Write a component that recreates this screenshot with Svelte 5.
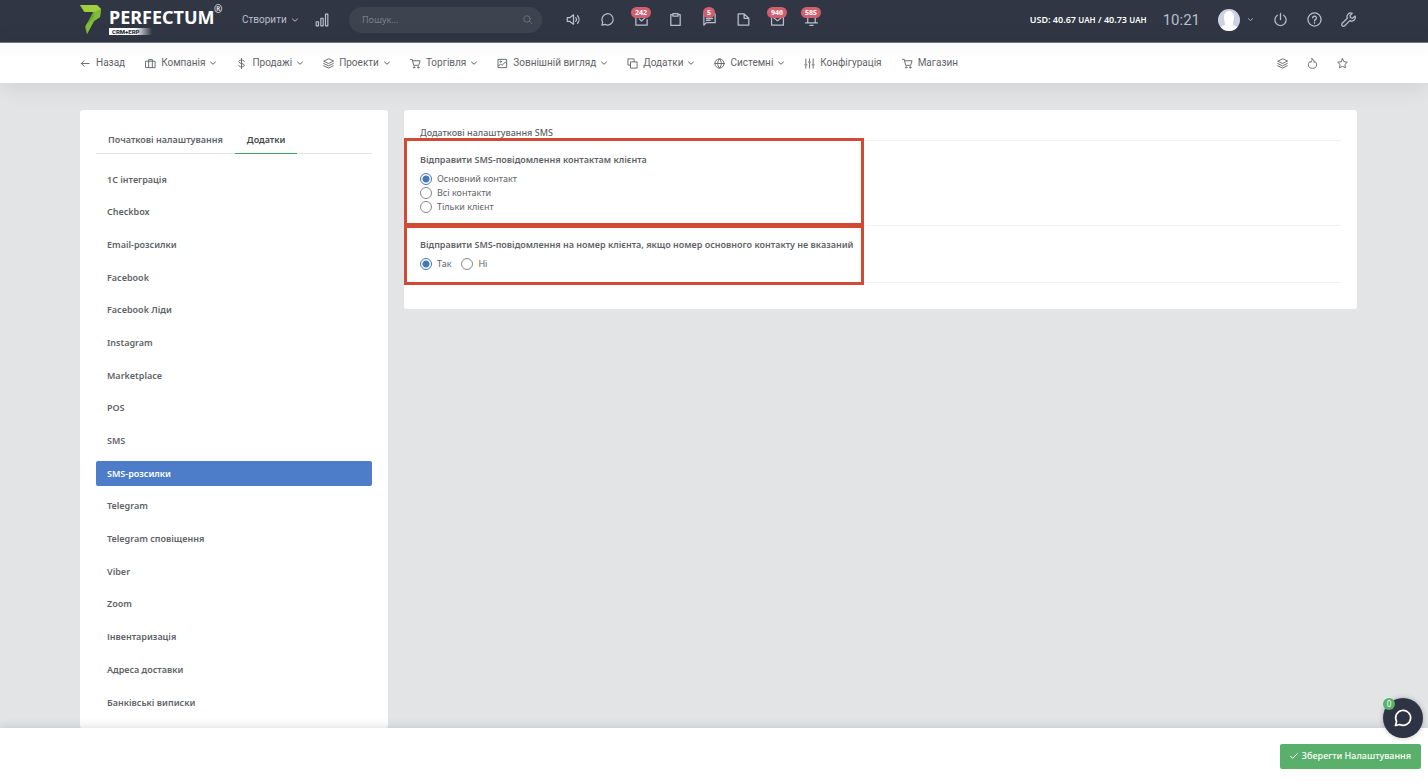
<script>
  const icons = {
    sound: '<path d="M2 9v6h4l6 4.500V4.500L6 9H2zM15.500 9a4 4 0 0 1 0 6M18.500 6a9 9 0 0 1 0 12"/>',
    chat: '<path d="M3 21l1.300-4.800A9 9 0 1 1 8 19.800z"/>',
    check: '<path d="M8.500 11l3.500 3.500L20 7M21 12v9H3V4h12"/>',
    clipboard: '<path d="M8 4H4.500v17.500h15V4H16M8 2.500h8v4H8z"/>',
    message: '<path d="M3 3h18v14H7l-4 4zM7 7.500h10M7 10.500h10M7 13.500h6"/>',
    file: '<path d="M13 3H3.500v18h17V10zM13 3v7h7"/>',
    mail: '<path d="M2.500 4h19v17h-19zM3 7l9 7 9-7"/>',
    bell: '<path d="M6 17V9a6 6 0 0 1 12 0v8M2.500 17.500h19M9.500 21.500h5"/>',
    power: '<path d="M7 5.200a9 9 0 1 0 10 0M12 2v10"/>',
    help: '<circle cx="12" cy="12" r="10.500"/><path d="M9 9.500a3 3 0 1 1 4.500 2.700c-1 .6-1.500 1-1.500 2.100M12 16.800v1"/>',
    wrench: '<path d="M22.500 6.500l-4 3.500-3.500-1-.5-3.500L18 2a6 6 0 0 0-7.800 8L2 18a2.800 2.800 0 0 0 4 4l8-8.200a6 6 0 0 0 8.500-7.300z"/>',
    back: '<path d="M20 12H3M9 6l-6 6 6 6"/>',
    briefcase: '<path d="M2 7h20v14H2zM8 21V3.500h8V21"/>',
    dollar: '<path d="M12 1v22M18 7.500C17.500 5.500 15 4.500 12 4.500c-3.500 0-6 1.500-6 3.700 0 5 12 2.300 12 7.500 0 2.300-2.200 3.800-6 3.800-3.500 0-5.500-1.200-6-3.500"/>',
    layers: '<path d="M12 2L1.500 7 12 12l10.500-5zM1.500 12L12 17l10.500-5M1.500 17L12 22l10.500-5"/>',
    cart: '<path d="M1 3h4l3 13h11l3-10H6"/><circle cx="9" cy="20.500" r="1.500"/><circle cx="18" cy="20.500" r="1.500"/>',
    image: '<path d="M3 3h18v18H3zM3 17l5-4 3 3 7-7 3 3"/><circle cx="8" cy="8" r="1.500"/>',
    copy: '<path d="M8.500 8.500H22V22H8.500zM8 15.500H2V2h13.500v6"/>',
    globe: '<circle cx="12" cy="12" r="10"/><path d="M2 12h20M12 2c-5.500 6-5.500 14 0 20M12 2c5.500 6 5.500 14 0 20"/>',
    sliders: '<path d="M4 2v11M4 17v5M12 2v5M12 11v11M20 2v11M20 17v5M1.500 15h5M9.500 9h5M17.500 15h5"/>',
    fire: '<path d="M11 1.500c1 4-1.500 5.500-2.500 8.500-1-.5-1.500-1.500-2-2.500C4.500 9.500 3 12 3 14.500a9 8 0 0 0 18 0c0-3-1.500-5.500-4-7-.3 1.500-.8 2-1.800 2.500.3-3.500-1-7-4.200-8.500z"/>',
    star: '<path d="M12 1.500l3.200 6.700 7.300 1-5.300 5.100 1.300 7.200-6.500-3.400-6.500 3.400 1.300-7.200-5.300-5.100 7.300-1z"/>',
    down: '<path stroke-width="4" d="M2 8l10 9 10-9"/>',
    tick: '<path stroke-width="3" d="M2 13l6 6L22 5"/>',
    search: '<circle cx="10.500" cy="10.500" r="8.500"/><path d="M17 17l6 6"/>',
    bars: '<path d="M2 15h4v7H2zM10 9h4v13h-4zM18 2h4v20h-4z"/>'
  };

  const shortcuts = [
    { icon: 'sound', label: 'Звук' },
    { icon: 'chat', label: 'Чат' },
    { icon: 'check', label: 'Завдання', count: 242 },
    { icon: 'clipboard', label: 'Нотатки' },
    { icon: 'message', label: 'Повідомлення', count: 5 },
    { icon: 'file', label: 'Файли' },
    { icon: 'mail', label: 'Пошта', count: 946 },
    { icon: 'bell', label: 'Сповіщення', count: 585 }
  ];
  const tools = [
    { icon: 'power', label: 'Вийти' },
    { icon: 'help', label: 'Довідка' },
    { icon: 'wrench', label: 'Налаштування' }
  ];
  const menu = [
    { icon: 'back', label: 'Назад' },
    { icon: 'briefcase', label: 'Компанія', sub: true },
    { icon: 'dollar', label: 'Продажі', sub: true },
    { icon: 'layers', label: 'Проекти', sub: true },
    { icon: 'cart', label: 'Торгівля', sub: true },
    { icon: 'image', label: 'Зовнішній вигляд', sub: true },
    { icon: 'copy', label: 'Додатки', sub: true },
    { icon: 'globe', label: 'Системні', sub: true },
    { icon: 'sliders', label: 'Конфігурація' },
    { icon: 'cart', label: 'Магазин' }
  ];
  const quick = [
    { icon: 'layers', label: 'Шари' },
    { icon: 'fire', label: 'Популярне' },
    { icon: 'star', label: 'Обране' }
  ];
  const modules = [
    '1C інтеграція', 'Checkbox', 'Email-розсилки', 'Facebook', 'Facebook Ліди', 'Instagram',
    'Marketplace', 'POS', 'SMS', 'SMS-розсилки', 'Telegram', 'Telegram сповіщення', 'Viber',
    'Zoom', 'Інвентаризація', 'Адреса доставки', 'Банківські виписки'
  ];
  const recipients = ['Основний контакт', 'Всі контакти', 'Тільки клієнт'];

  let active = $state('SMS-розсилки');
  let recipient = $state('Основний контакт');
  let fallback = $state('Так');
</script>

{#snippet icon(name, size = 15)}
  <svg class="icon" width={size} height={size} viewBox="0 0 24 24" aria-hidden="true">{@html icons[name]}</svg>
{/snippet}

<div class="page">
  <header class="topbar">
    <a class="logo" href="#home">
      <svg width="22" height="30" viewBox="0 0 22 30" aria-hidden="true">
        <path d="M0 0h17l4 4-1 8-6 4-7 13-2-7 5-9 3-6H4z" fill="#69aa35" />
        <path d="M0 0h17l4 4-6 3H5z" fill="#a2cf3e" />
        <path d="M15 7l6-3-1 8-6 4-7 13-1-9 7-6z" fill="#82bd3a" />
      </svg>
      <span class="brand">
        <span class="name">PERFECTUM</span>
        <span class="tag">CRM+ERP</span>
        <span class="reg">®</span>
      </span>
    </a>
    <button class="create">Створити {@render icon('down', 6)}</button>
    <button class="tool" aria-label="Звіти">{@render icon('bars', 14)}</button>
    <div class="search">
      <input type="search" placeholder="Пошук..." aria-label="Пошук" />
      {@render icon('search', 9)}
    </div>
    <div class="tools">
      {#each shortcuts as s}
        <button class="tool" aria-label={s.label}>
          {@render icon(s.icon)}
          {#if s.count}<span class="count">{s.count}</span>{/if}
        </button>
      {/each}
    </div>
    <div class="rate">USD: 40.67 <small>UAH</small> / 40.73 <small>UAH</small></div>
    <time class="clock">10:21</time>
    <button class="profile" aria-label="Профіль">
      <svg width="22" height="22" viewBox="0 0 22 22" aria-hidden="true">
        <clipPath id="face"><circle cx="11" cy="11" r="11" /></clipPath>
        <g clip-path="url(#face)">
          <path d="M0 0h22v22H0z" fill="#cbd2e3" />
          <path d="M6 8c0-8 10-8 10 0 0 4-1 5-1 8l5 2v4H2v-4l5-2c0-3-1-4-1-8z" fill="#fff" />
        </g>
      </svg>
      {@render icon('down', 5)}
    </button>
    <div class="tools">
      {#each tools as t}
        <button class="tool" aria-label={t.label}>{@render icon(t.icon)}</button>
      {/each}
    </div>
  </header>

  <nav class="menu">
    {#each menu as m}
      <a href="#menu">
        {@render icon(m.icon, 11)}
        <span>{m.label}</span>
        {#if m.sub}{@render icon('down', 6)}{/if}
      </a>
    {/each}
    <div class="quick">
      {#each quick as q}
        <button aria-label={q.label}>{@render icon(q.icon, 11)}</button>
      {/each}
    </div>
  </nav>

  <main class="content">
    <aside class="card side">
      <div class="tabs" role="tablist">
        <button role="tab" aria-selected="false">Початкові налаштування</button>
        <button role="tab" aria-selected="true" class="on">Додатки</button>
      </div>
      <ul>
        {#each modules as m}
          <li><button class:active={m === active} onclick={() => (active = m)}>{m}</button></li>
        {/each}
      </ul>
    </aside>

    <form class="card settings" id="settings">
      <h1>Додаткові налаштування SMS</h1>
      <fieldset>
        <legend>Відправити SMS-повідомлення контактам клієнта</legend>
        <div class="options">
          {#each recipients as r}
            <label><input type="radio" name="recipient" value={r} bind:group={recipient} />{r}</label>
          {/each}
        </div>
      </fieldset>
      <fieldset>
        <legend>Відправити SMS-повідомлення на номер клієнта, якщо номер основного контакту не вказаний</legend>
        <div class="options inline">
          {#each ['Так', 'Ні'] as r}
            <label><input type="radio" name="fallback" value={r} bind:group={fallback} />{r}</label>
          {/each}
        </div>
      </fieldset>
    </form>
  </main>

  <footer>
    <button class="save" form="settings" type="button">{@render icon('tick', 8)} Зберегти Налаштування</button>
    <button class="bubble" aria-label="Відкрити чат">
      {@render icon('chat', 20)}
      <span>0</span>
    </button>
  </footer>
</div>

<style>
  :global(body) {
    background: #e3e4e6;
  }
  .page {
    display: flex;
    flex-direction: column;
    min-height: 100vh;
    font: 9px/14px 'Noto Sans', sans-serif;
    color: #5f6368;
  }
  .page *,
  .page *::after {
    box-sizing: border-box;
  }
  button {
    padding: 0;
    border: 0;
    background: none;
    color: inherit;
    font: inherit;
    cursor: pointer;
  }
  a {
    color: inherit;
    text-decoration: none;
  }
  .icon {
    flex: none;
    fill: none;
    stroke: currentColor;
    stroke-width: 2;
    stroke-linejoin: round;
    stroke-linecap: round;
  }

  .topbar {
    display: flex;
    align-items: center;
    height: 43px;
    padding: 0 63px 3px 80px;
    background: #303644;
    border-bottom: 1px solid #777a82;
    color: #b9bfcb;
  }
  .logo {
    display: flex;
    align-items: center;
    gap: 7px;
    width: 162px;
    color: #fff;
  }
  .brand {
    position: relative;
    display: flex;
    flex-direction: column;
    align-items: flex-start;
    gap: 2px;
    padding-top: 3px;
  }
  .name {
    font-weight: 700;
    font-size: 18px;
    line-height: 18px;
  }
  .tag {
    padding: 0 12px 0 3px;
    background: linear-gradient(90deg, #fff 60%, transparent);
    color: #303644;
    font: 900 6px/7px Roboto, sans-serif;
  }
  .reg {
    position: absolute;
    top: -1px;
    left: 105px;
    font-size: 10px;
    line-height: 10px;
  }
  .create {
    display: flex;
    align-items: center;
    gap: 5px;
    width: 63px;
    font: 10px/14px Roboto, sans-serif;
  }
  .tool {
    position: relative;
    display: grid;
    place-items: center;
    width: 34px;
    height: 26px;
  }
  .search {
    display: flex;
    align-items: center;
    width: 193px;
    height: 26px;
    margin: 0 14px 0 10px;
    padding: 0 10px 0 13px;
    border-radius: 13px;
    background: #3d434f;
    color: #777c87;
  }
  .search input {
    flex: 1;
    min-width: 0;
    padding: 0;
    border: 0;
    outline: 0;
    background: none;
    color: #d0d4dc;
    font: inherit;
  }
  .search input::placeholder {
    color: #7b808a;
  }
  .tools {
    display: flex;
  }
  .count {
    position: absolute;
    top: 0;
    left: 50%;
    min-width: 12px;
    padding: 0 4px;
    border-radius: 6px;
    background: #d25f70;
    color: #fff;
    font-weight: 700;
    font-size: 7px;
    line-height: 11px;
    transform: translateX(-50%);
  }
  .rate {
    margin-left: auto;
    color: #fff;
    font-weight: 600;
    white-space: nowrap;
  }
  .rate small {
    font-size: 8px;
  }
  .clock {
    margin-left: 16px;
    font: 15px/18px Roboto, sans-serif;
  }
  .profile {
    display: flex;
    align-items: center;
    gap: 8px;
    margin: 0 10px 0 18px;
  }

  .menu {
    display: flex;
    align-items: center;
    gap: 20px;
    height: 40px;
    padding: 0 71px 0 80px;
    background: linear-gradient(#fafafa, #fff 40%);
    box-shadow: 0 2px 24px rgb(0 0 0 / 10%);
    font: 10px/14px Roboto, sans-serif;
  }
  .menu a {
    display: flex;
    align-items: center;
    gap: 5px;
    white-space: nowrap;
  }
  .quick {
    display: flex;
    margin-left: auto;
  }
  .quick button {
    display: grid;
    place-items: center;
    width: 30px;
    height: 26px;
  }

  .content {
    flex: 1;
    display: grid;
    grid-template-columns: 308px minmax(0, 1fr);
    align-items: start;
    gap: 16px;
    padding: 27px 71px 0 80px;
  }
  .card {
    border-radius: 3px 3px 2px 2px;
    background: #fff;
  }
  .side {
    align-self: stretch;
    display: flex;
    flex-direction: column;
    padding: 16px 16px 13px;
    font-weight: 600;
  }
  .tabs {
    display: flex;
    border-bottom: 1px solid #e3e5e6;
  }
  .tabs button {
    height: 28px;
    margin-bottom: -1px;
    padding: 0 12px;
  }
  .tabs .on {
    border-bottom: 1px solid #3fa65c;
    color: #44484d;
  }
  .side ul {
    flex: 1;
    display: flex;
    flex-direction: column;
    justify-content: space-between;
    margin: 13px 0 0;
    padding: 0;
    list-style: none;
  }
  .side li button {
    width: 100%;
    height: 25px;
    padding: 0 11px;
    border-radius: 2px;
    text-align: left;
  }
  .side li .active {
    background: #4d7dc8;
    color: #fff;
  }

  .settings {
    padding: 16px 16px 26px;
  }
  h1 {
    margin: 0;
    border-bottom: 1px solid #f0f0f1;
    font-weight: 500;
    font-size: 9px;
    line-height: 14px;
  }
  fieldset {
    position: relative;
    min-width: 0;
    margin: 0;
    padding: 12px 0 11px;
    border: 0;
    border-bottom: 1px solid #f3f3f4;
  }
  fieldset::after {
    content: '';
    position: absolute;
    inset: -3px auto -3px -16px;
    width: 460px;
    max-width: calc(100% + 32px);
    border: 3px solid #d34a34;
    pointer-events: none;
  }
  legend {
    float: left;
    width: 100%;
    padding: 0;
    font-weight: 600;
  }
  .options {
    clear: both;
    display: flex;
    flex-direction: column;
    align-items: flex-start;
    padding-top: 5px;
  }
  .inline {
    flex-direction: row;
    gap: 10px;
  }
  label {
    display: flex;
    align-items: center;
    gap: 5px;
    height: 14px;
  }
  input[type='radio'] {
    appearance: none;
    width: 12px;
    height: 12px;
    margin: 0;
    border: 1px solid #85898d;
    border-radius: 50%;
  }
  input[type='radio']:checked {
    border-color: #4577b8;
    background: radial-gradient(#4577b8 3px, #fff 4px);
  }

  footer {
    position: sticky;
    bottom: 0;
    display: flex;
    justify-content: flex-end;
    align-items: center;
    height: 56px;
    padding: 0 7px;
    background: #fff;
    box-shadow: 0 0 10px rgb(0 0 0 / 16%);
  }
  .save {
    display: flex;
    align-items: center;
    gap: 4px;
    height: 25px;
    padding: 0 10px;
    border-radius: 2px;
    background: #59b06b;
    color: #fff;
    font-weight: 500;
  }
  .bubble {
    position: absolute;
    right: 5px;
    bottom: 46px;
    display: grid;
    place-items: center;
    width: 40px;
    height: 40px;
    border-radius: 50%;
    background: #2e3443;
    box-shadow: 0 0 5px rgb(0 0 0 / 25%);
    color: #fff;
  }
  .bubble span {
    position: absolute;
    top: 0;
    left: 0;
    width: 12px;
    border-radius: 6px;
    background: #59b06b;
    font-size: 8px;
    line-height: 12px;
  }
</style>
